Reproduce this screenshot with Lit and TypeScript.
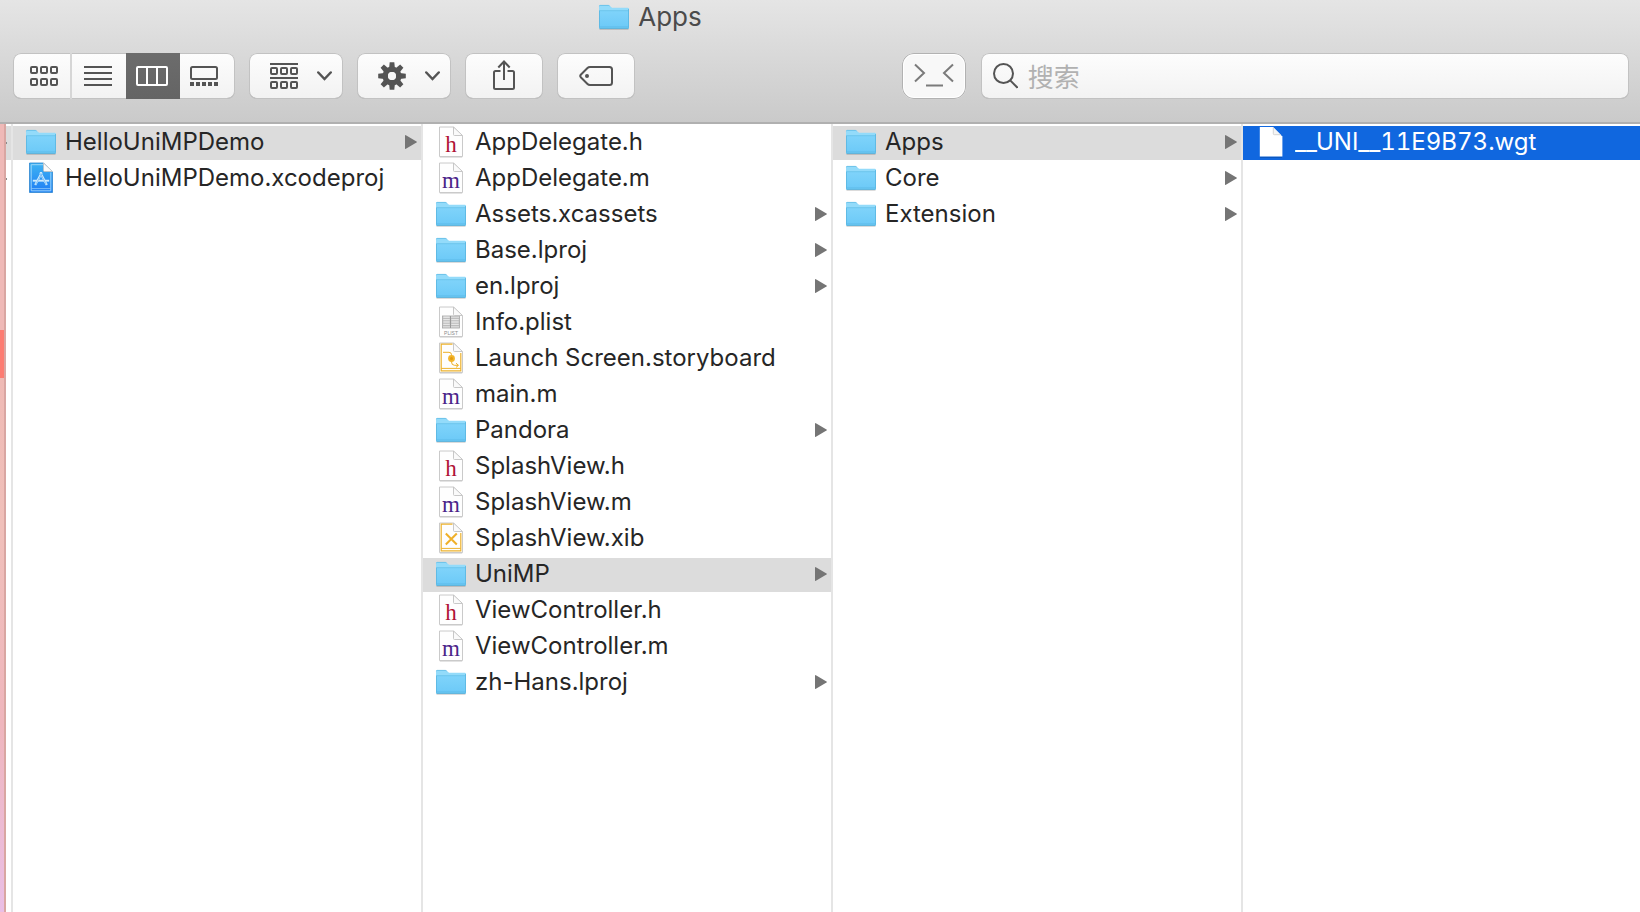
import { LitElement, html, svg, css, nothing } from "lit";
import { customElement, property, state } from "lit/decorators.js";
import { classMap } from "lit/directives/class-map.js";

type Kind = "folder" | "project" | "h" | "m" | "plist" | "storyboard" | "xib" | "blank";

interface Entry {
  name: string;
  kind: Kind;
}

const columns: { label: string; selected: string; entries: Entry[] }[] = [
  {
    label: "Project",
    selected: "HelloUniMPDemo",
    entries: [
      { name: "HelloUniMPDemo", kind: "folder" },
      { name: "HelloUniMPDemo.xcodeproj", kind: "project" },
    ],
  },
  {
    label: "HelloUniMPDemo",
    selected: "UniMP",
    entries: [
      { name: "AppDelegate.h", kind: "h" },
      { name: "AppDelegate.m", kind: "m" },
      { name: "Assets.xcassets", kind: "folder" },
      { name: "Base.lproj", kind: "folder" },
      { name: "en.lproj", kind: "folder" },
      { name: "Info.plist", kind: "plist" },
      { name: "Launch Screen.storyboard", kind: "storyboard" },
      { name: "main.m", kind: "m" },
      { name: "Pandora", kind: "folder" },
      { name: "SplashView.h", kind: "h" },
      { name: "SplashView.m", kind: "m" },
      { name: "SplashView.xib", kind: "xib" },
      { name: "UniMP", kind: "folder" },
      { name: "ViewController.h", kind: "h" },
      { name: "ViewController.m", kind: "m" },
      { name: "zh-Hans.lproj", kind: "folder" },
    ],
  },
  {
    label: "UniMP",
    selected: "Apps",
    entries: [
      { name: "Apps", kind: "folder" },
      { name: "Core", kind: "folder" },
      { name: "Extension", kind: "folder" },
    ],
  },
  {
    label: "Apps",
    selected: "__UNI__11E9B73.wgt",
    entries: [{ name: "__UNI__11E9B73.wgt", kind: "blank" }],
  },
];

@customElement("file-icon")
export class FileIcon extends LitElement {
  @property() kind: Kind = "folder";

  static styles = css`
    :host {
      display: flex;
      justify-content: center;
      flex: none;
      width: 32px;
    }
    .icon {
      display: block;
      overflow: visible;
    }
    .letter {
      font-family: "Liberation Serif", serif;
      font-size: 23px;
      text-anchor: middle;
    }
    .tag {
      font-family: "Liberation Sans", sans-serif;
      font-size: 5px;
      text-anchor: middle;
      fill: #8a8a8a;
    }
    .h {
      fill: #b01236;
    }
    .m {
      fill: #4b2489;
    }
  `;

  private folder() {
    return html`<svg class="icon" width="32" height="28" viewBox="0 0 32 28" aria-hidden="true">
      <defs>
        <linearGradient id="front" x1="0" y1="0" x2="0" y2="1">
          <stop offset="0" stop-color="#7fd3fa" />
          <stop offset="1" stop-color="#6bc9f7" />
        </linearGradient>
      </defs>
      <path d="M1.5 26.2h29" stroke="#000" stroke-opacity=".16" stroke-width="1.4" />
      <path d="M1 3.2Q1 2 2.2 2h8q.9 0 1.6.7l1.6 1.5q.6.6 1.5.6h14.900q1.200 0 1.200 1.200V9H1z" fill="#93dbfa" />
      <path d="M1.400 3.200q0-.8.8-.8h8q.8 0 1.400.6" fill="none" stroke="#62bbe4" stroke-width=".8" />
      <path d="M1 8h30v16.500q0 1.200-1.200 1.200H2.200Q1 25.700 1 24.500z" fill="url(#front)" />
      <path d="M1 7.700h30" stroke="#62bfe9" stroke-width=".8" />
      <path d="M1.500 8v16.500M30.500 6v18.500" stroke="#59b5df" stroke-width=".8" />
      <path d="M1.600 23.700h28.800" stroke="#5fbce9" stroke-width=".7" />
      <path d="M1.500 25.300h29" stroke="#53abd5" stroke-width=".9" />
    </svg>`;
  }

  private mark() {
    switch (this.kind) {
      case "h":
        return svg`<text class="letter h" x="12" y="26">h</text>`;
      case "m":
        return svg`<text class="letter m" x="12" y="26">m</text>`;
      case "plist":
        return svg`
          <rect x="3.500" y="10" width="17" height="12" fill="#dcdcdc" stroke="#a6a6a6" stroke-width=".8" />
          <path d="M3.500 12.400h17M3.500 14.800h17M3.500 17.200h17M3.500 19.600h17" stroke="#b0b0b0" stroke-width=".8" />
          <path d="M5 11.200h5M5 13.600h5M5 16h5M5 18.400h5M13 13.600h6M13 16h6M13 18.400h6" stroke="#ececec" stroke-width=".7" />
          <path d="M11.500 10v12" stroke="#999" stroke-width="1" />
          <text class="tag" x="12" y="28.500">PLIST</text>`;
      case "storyboard":
        return svg`
          <path d="M13.500 2.200H2.200v26.600h19.600V11" fill="none" stroke="#edb22d" stroke-width="1.200" />
          <path d="M2.200 26.400h19.600" stroke="#edb22d" stroke-width="1" />
          <path d="M4 10.300h6q2.500 0 2.500 2.500v7q0 3.500 3 3.500h3.500M17 21.200l2.500 2.100-2.500 2.100" fill="none" stroke="#edaf26" stroke-width="1" />
          <circle cx="12.500" cy="16.500" r="3.400" fill="#f2b42a" />
          <circle cx="12.500" cy="16.500" r="1.500" fill="#e29c12" />`;
      case "xib":
        return svg`
          <path d="M13.500 2.200H2.200v26.600h19.600V11" fill="none" stroke="#edb22d" stroke-width="1.200" />
          <path d="M2.200 26.400h19.600" stroke="#edb22d" stroke-width="1" />
          <path d="M6.800 11.500l11 11M17.800 11.500l-11 11" stroke="#efb02a" stroke-width="2" />`;
      default:
        return nothing;
    }
  }

  private document() {
    return html`<svg class="icon" width="24" height="32" viewBox="0 0 24 32" aria-hidden="true">
      <path d="M.8 31.300h22.400" stroke="#000" stroke-opacity=".14" />
      <path d="M.5 1h14l9 9v20.500H.5z" fill="#fefefe" stroke="#c4c4c4" stroke-width=".9" />
      ${this.mark()}
      <path d="M14.500 1v7.500q0 1 1 1H23.500z" fill="#fafafa" stroke="#c2c2c2" stroke-width=".9" />
    </svg>`;
  }

  private project() {
    return html`<svg class="icon" width="24" height="32" viewBox="0 0 24 32" aria-hidden="true">
      <defs>
        <linearGradient id="blue" x1="0" y1="0" x2="0" y2="1">
          <stop offset="0" stop-color="#3fb4f2" />
          <stop offset="1" stop-color="#1e7df5" />
        </linearGradient>
      </defs>
      <path d="M.5 1h14l9 9v20.500H.5z" fill="url(#blue)" stroke="#2f86cf" stroke-width=".8" />
      <path d="M14 2.700H2.200v26.100h19.600V10.500" fill="none" stroke="#a5dbfb" stroke-width=".9" />
      <path d="M2.200 26.600h19.600" stroke="#8fcbfa" stroke-width=".8" />
      <path d="M12.800 10.500L6.200 23M11.200 10.500L17.800 23" stroke="#cdeafd" stroke-width="2.200" />
      <path d="M3.800 18.700h16.400" stroke="#cdeafd" stroke-width="1.900" />
      <path d="M12.800 11.500l-6 10.800M11.400 11.500l5.800 10.800" stroke="#4aa5f3" stroke-width=".6" />
      <path d="M14.500 1v7.500q0 1 1 1H23.500z" fill="#fafafa" stroke="#c2c2c2" stroke-width=".8" />
    </svg>`;
  }

  private blank() {
    return html`<svg class="icon" width="24" height="32" viewBox="0 0 24 32" aria-hidden="true">
      <path d="M1 31.200h22" stroke="#000" stroke-opacity=".22" />
      <path d="M.8 1H14l9.400 9.500v20H.8z" fill="#fff" />
      <path d="M14.300 1.300v6.400q0 1 1 1h6.400" fill="#f4f4f4" stroke="#cfcfcf" stroke-width=".9" />
    </svg>`;
  }

  render() {
    if (this.kind === "folder") return this.folder();
    if (this.kind === "project") return this.project();
    if (this.kind === "blank") return this.blank();
    return this.document();
  }
}

const cells = (y: number) =>
  [1, 11, 21].map((x) => svg`<rect x=${x} y=${y} width="6" height="6" rx="1" />`);

const viewIcons = {
  icons: html`<svg class="glyph" width="28" height="20" viewBox="0 0 28 20" aria-hidden="true">
    ${svg`<g class="line">${cells(1)}${cells(13)}</g>`}
  </svg>`,
  list: html`<svg class="glyph" width="28" height="20" viewBox="0 0 28 20" aria-hidden="true">
    <path class="line" d="M0 1h28M0 7h28M0 13h28M0 19h28" />
  </svg>`,
  columns: html`<svg class="glyph" width="32" height="20" viewBox="0 0 32 20" aria-hidden="true">
    <rect class="line" x="1" y="1" width="30" height="18" rx="1" />
    <path class="line" d="M11 1v18M21 1v18" />
  </svg>`,
  gallery: html`<svg class="glyph" width="28" height="20" viewBox="0 0 28 20" aria-hidden="true">
    <rect class="line" x="1" y="1" width="26" height="12" rx="1.500" />
    <path class="dots" d="M0 16h4v4H0zM6 16h4v4H6zM12 16h4v4h-4zM18 16h4v4h-4zM24 16h4v4h-4z" />
  </svg>`,
};

const chevron = html`<svg class="glyph" width="15" height="10" viewBox="0 0 15 10" aria-hidden="true">
  <path class="chevron" d="M1.300 1.500l6.200 6.500 6.200-6.500" />
</svg>`;

const teeth = [0, 45, 90, 135, 180, 225, 270, 315].map(
  (angle) => svg`<path d="M11.700 .2h4.600l.6 6h-5.800z" transform="rotate(${angle} 14 14)" />`
);

@customElement("app-root")
export class AppRoot extends LitElement {
  @state() private view: keyof typeof viewIcons = "columns";
  @state() private picks = columns.map((column) => column.selected);

  static styles = css`
    :host {
      display: flex;
      flex-direction: column;
      min-height: 100vh;
      background: #fff;
      color: #262626;
      font-family: Inter, "Noto Sans CJK SC", sans-serif;
      font-size: 24px;
      line-height: 32px;
    }
    * {
      box-sizing: border-box;
    }
    button,
    input {
      margin: 0;
      border: 0;
      background: none;
      color: inherit;
      font: inherit;
    }
    .header {
      background: linear-gradient(#e5e5e5, #cacaca);
      border-bottom: 2px solid #b0b0b0;
    }
    .title {
      display: flex;
      align-items: center;
      justify-content: center;
      gap: 8px;
      height: 34px;
      margin: 0;
      padding-right: 340px;
      color: #4b4b4b;
      font-size: 26px;
      font-weight: 400;
    }
    .toolbar {
      display: flex;
      gap: 14px;
      padding: 19px 11px 23px 13px;
    }
    .control {
      display: flex;
      align-items: center;
      justify-content: center;
      flex: none;
      height: 46px;
      padding: 0;
      border-radius: 8px;
      background: linear-gradient(#fdfdfd, #f2f2f2);
      box-shadow: inset 0 0 0 1px #c2c2c2, inset 0 -1px 0 #a9a9a9;
      color: #545454;
    }
    .segments {
      padding: 0 1px;
    }
    .segment {
      display: flex;
      align-items: center;
      justify-content: center;
      width: 54px;
      height: 46px;
      padding: 0 2px 0 0;
    }
    .segment:first-child {
      width: 58px;
      padding: 0 0 0 4px;
      border-right: 2px solid #d6d6d6;
    }
    .segment:last-child {
      padding-right: 6px;
    }
    .segment.active {
      background: linear-gradient(#6c6c6c, #646464);
      color: #fff;
    }
    .menu {
      gap: 19px;
      width: 94px;
      padding-left: 9px;
    }
    .single {
      width: 78px;
    }
    .glyph {
      display: block;
      flex: none;
      fill: currentColor;
    }
    .line {
      fill: none;
      stroke: currentColor;
      stroke-width: 2;
    }
    .chevron {
      fill: none;
      stroke: currentColor;
      stroke-width: 2.500;
      stroke-linecap: round;
    }
    .right {
      display: flex;
      flex: none;
      gap: 15px;
      width: 45%;
      margin-left: auto;
    }
    .face {
      width: 64px;
      border-radius: 12px;
      background: #f8f8f8;
      color: #7b7b7b;
      box-shadow: inset 0 0 0 1px #b2b2b2, inset 0 0 0 2px #fff;
    }
    .search {
      flex: 1;
      justify-content: flex-start;
      gap: 10px;
      min-width: 0;
      padding: 0 12px;
    }
    .query {
      flex: 1;
      min-width: 0;
      height: 44px;
      padding: 2px 0 0;
      font-size: 26px;
      outline: none;
    }
    .query::placeholder {
      color: #b1b1b1;
      opacity: 1;
    }
    .browser {
      display: grid;
      grid-template-columns: 13px 410fr 410fr 410fr 397fr;
      flex: 1;
    }
    .edge {
      display: grid;
      grid-template-columns: 6px 1fr;
      border-right: 2px solid #e5e5e5;
    }
    .backdrop {
      border-right: 2px solid #d9a6a2;
      background: linear-gradient(
        #efb9b7 0 206px,
        #fd7c72 206px 254px,
        #efbab5 254px,
        #f0c0ba 400px,
        #efb6bd 600px,
        #eabfe6 100%
      );
    }
    .peek,
    .column {
      display: flex;
      flex-direction: column;
      gap: 2px;
      min-width: 0;
      margin: 0;
      padding: 2px 0 0;
      list-style: none;
    }
    .column {
      border-right: 2px solid #e5e5e5;
    }
    .column:last-child {
      border-right: 0;
      font-variant-numeric: tabular-nums;
    }
    .sliver {
      display: flex;
      align-items: center;
      height: 34px;
    }
    .sliver.active {
      background: #dcdcdc;
    }
    .tip {
      width: 1px;
      height: 2px;
      background: #8a8a8a;
    }
    .row {
      display: flex;
      align-items: center;
      gap: 8px;
      width: 100%;
      height: 34px;
      padding: 0 4px 2px 12px;
      font-variant-numeric: inherit;
      text-align: left;
      white-space: nowrap;
    }
    .row.active {
      background: #dcdcdc;
    }
    .column:last-child .row.active {
      background: #1067df;
      color: #fff;
    }
    .name {
      flex: 1;
      min-width: 0;
      overflow: hidden;
      text-overflow: ellipsis;
    }
    .arrow {
      flex: none;
      fill: #757575;
    }
  `;

  private pick(index: number, name: string) {
    this.picks = this.picks.map((current, i) => (i === index ? name : current));
  }

  private segment(key: keyof typeof viewIcons, label: string) {
    return html`<button
      class=${classMap({ segment: true, active: this.view === key })}
      aria-label=${label}
      aria-pressed=${this.view === key}
      @click=${() => (this.view = key)}
    >
      ${viewIcons[key]}
    </button>`;
  }

  private row(entry: Entry, index: number) {
    const active = this.picks[index] === entry.name;
    return html`<li>
      <button
        class=${classMap({ row: true, active })}
        aria-current=${active}
        @click=${() => this.pick(index, entry.name)}
      >
        <file-icon .kind=${entry.kind}></file-icon>
        <span class="name">${entry.name}</span>
        ${entry.kind === "folder"
          ? html`<svg class="arrow" width="12" height="14" viewBox="0 0 12 14" aria-hidden="true">
              <path d="M0 .6Q0-.2.9.2L11.500 6.400q.8.600 0 1.200L.9 13.800Q0 14.200 0 13.400z" />
            </svg>`
          : nothing}
      </button>
    </li>`;
  }

  render() {
    return html`
      <header class="header">
        <h1 class="title"><file-icon kind="folder"></file-icon>Apps</h1>
        <div class="toolbar">
          <div class="control segments" role="group" aria-label="View">
            ${this.segment("icons", "Icons")} ${this.segment("list", "List")}
            ${this.segment("columns", "Columns")} ${this.segment("gallery", "Gallery")}
          </div>
          <button class="control menu" aria-label="Group">
            <svg class="glyph" width="28" height="26" viewBox="0 0 28 26" aria-hidden="true">
              <path class="line" d="M0 1h28M0 15h28" />
              <g class="line">${cells(5)}${cells(19)}</g>
            </svg>
            ${chevron}
          </button>
          <button class="control menu" aria-label="Action">
            <svg class="glyph" width="28" height="28" viewBox="0 0 28 28" aria-hidden="true">
              ${teeth}
              <circle cx="14" cy="14" r="6.700" fill="none" stroke="currentColor" stroke-width="5.600" />
              <circle cx="14" cy="14" r="4" fill="#f8f8f8" />
            </svg>
            ${chevron}
          </button>
          <button class="control single" aria-label="Share">
            <svg class="glyph" width="22" height="32" viewBox="0 0 22 32" aria-hidden="true">
              <path class="line" d="M7.500 11H2.500Q1 11 1 12.500V27.500Q1 29 2.500 29h17q1.500 0 1.500-1.500v-15Q21 11 19.500 11h-5" />
              <path class="line" d="M11 20V1.500M5.300 7.500L11 1.500l5.700 6" />
            </svg>
          </button>
          <button class="control single" aria-label="Tags">
            <svg class="glyph" width="34" height="20" viewBox="0 0 34 20" aria-hidden="true">
              <path class="line" d="M11 1h19.500Q33 1 33 3.500v13q0 2.500-2.500 2.500H11q-1.500 0-2.500-1L2 11.500q-1.500-1.500 0-3L8.500 2q1-1 2.500-1z" />
              <circle cx="8" cy="10" r="2" />
            </svg>
          </button>
          <div class="right">
            <button class="control face" aria-label="Terminal">
              <svg class="glyph" width="40" height="26" viewBox="0 0 40 26" aria-hidden="true">
                <path class="line" d="M1 1.500l9 8.500-9 8.500M39 1.500L30 10l9 8.500M12 22.500h17" />
              </svg>
            </button>
            <label class="control search">
              <svg class="glyph" width="25" height="26" viewBox="0 0 25 26" aria-hidden="true">
                <circle class="line" cx="10.500" cy="10.500" r="9.500" />
                <path class="line" d="M17.200 17.400l7.300 7.300" />
              </svg>
              <input class="query" type="search" placeholder="搜索" aria-label="搜索" />
            </label>
          </div>
        </div>
      </header>
      <main class="browser">
        <div class="edge">
          <div class="backdrop"></div>
          <div class="peek">
            <div class="sliver active"><span class="tip"></span></div>
            <div class="sliver"><span class="tip"></span></div>
          </div>
        </div>
        ${columns.map(
          (column, index) => html`<ul class="column" aria-label=${column.label}>
            ${column.entries.map((entry) => this.row(entry, index))}
          </ul>`
        )}
      </main>
    `;
  }
}
